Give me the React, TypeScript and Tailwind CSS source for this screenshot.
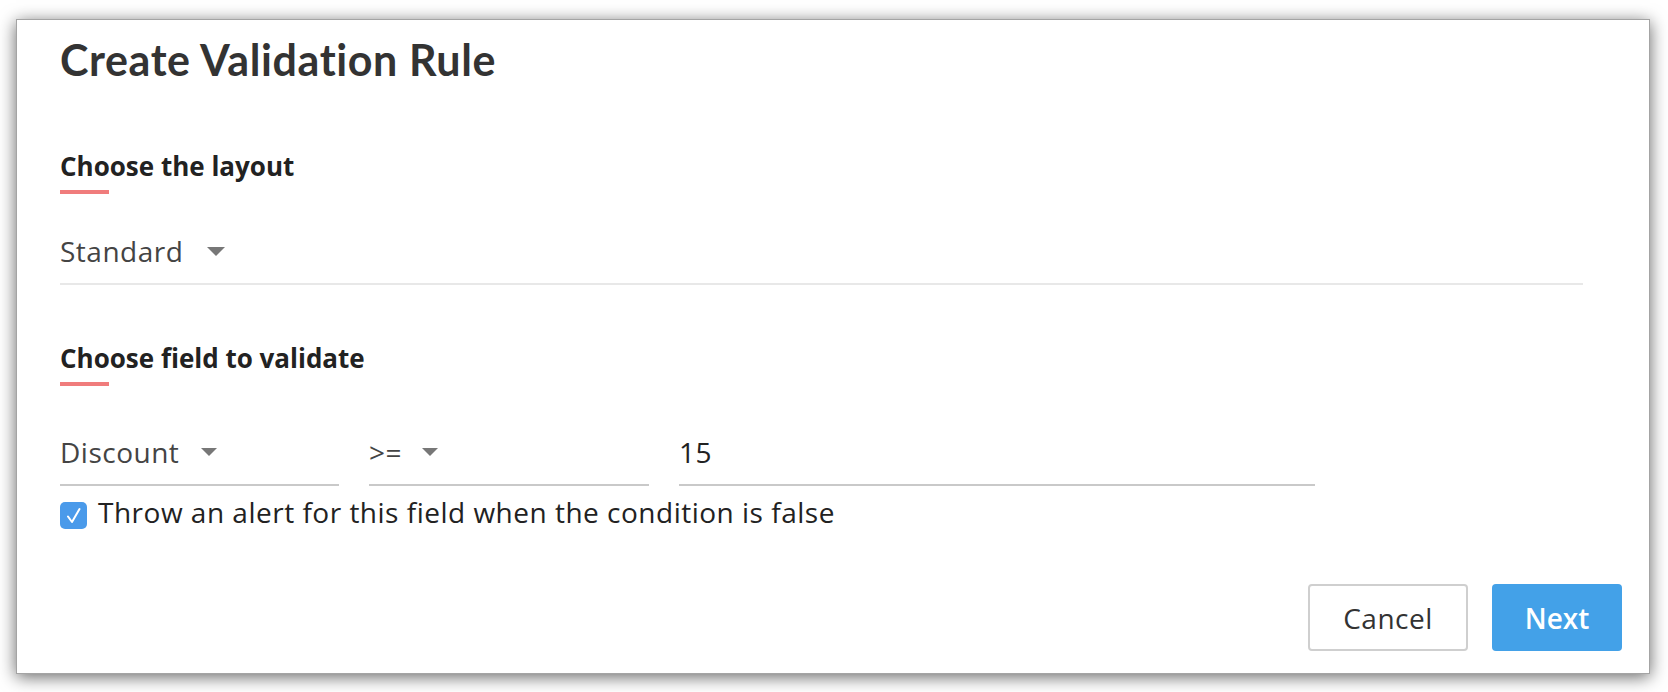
import React from "react";

function Caret({ w = 16, h = 8 }: { w?: number; h?: number }) {
  return (
    <svg width={w} height={h} viewBox="0 0 16 8" className="shrink-0">
      <path d="M0 0h16L8 8z" fill="#777" />
    </svg>
  );
}

function SectionTitle({ label }: { label: string }) {
  return (
    <div>
      <div className="text-[26px] leading-[32px] font-bold text-[#222]">{label}</div>
      <div className="mt-[8px] h-[4px] w-[49px] bg-[#f07c7c]" />
    </div>
  );
}

function SelectField({ value, width, gap }: { value: string; width: string; gap: string }) {
  return (
    <div className={`${width} flex items-center border-b-2 border-[#c9c9c9] pb-[14px]`}>
      <span className="text-[28px] leading-[36px] tracking-[0.5px] text-[#444]">{value}</span>
      <span className={gap}>
        <Caret />
      </span>
    </div>
  );
}

export default function App() {
  return (
    <div
      className="min-h-screen bg-white pt-[19px] pl-[16px]"
      style={{ fontFamily: "'Open Sans', 'Liberation Sans', sans-serif" }}
    >
      <div className="flex h-[655px] w-[1634px] flex-col border border-[#a4a4a4] bg-white pl-[43px] pr-[27px] pt-[14px] shadow-[0_3px_16px_rgba(0,0,0,0.6)]">
        {/* Header */}
        <h1 className="font-['Lato',sans-serif] text-[43px] leading-[52px] font-bold tracking-[0.6px] text-[#333]">
          Create Validation Rule
        </h1>

        {/* Layout */}
        <div className="mt-[64px]">
          <SectionTitle label="Choose the layout" />
        </div>
        <div className="mr-[39px] mt-[39px] flex items-center border-b-2 border-[#e8e8e8] pb-[14px]">
          <span className="text-[28px] leading-[36px] tracking-[0.5px] text-[#444]">Standard</span>
          <span className="ml-[24px]">
            <Caret w={18} h={9} />
          </span>
        </div>

        {/* Field */}
        <div className="mt-[57px]">
          <SectionTitle label="Choose field to validate" />
        </div>
        <div className="mt-[48px] flex gap-[30px]">
          <SelectField value="Discount" width="w-[279px]" gap="ml-[22px]" />
          <SelectField value=">=" width="w-[280px]" gap="ml-[20px]" />
          <div className="w-[636px] border-b-2 border-[#c9c9c9] pb-[14px]">
            <span className="text-[28px] leading-[36px] tracking-[0.5px] text-[#222]">15</span>
          </div>
        </div>

        <label className="mt-[16px] flex items-start gap-[11px]">
          <span className="h-[27px] w-[27px] shrink-0 rounded-[5px] bg-[#4a9aea]">
            <svg width="27" height="27" viewBox="0 0 27 27" fill="none">
              <path d="M8 14.5l4 5.5L19.5 7" stroke="white" strokeWidth="2" strokeLinecap="round" strokeLinejoin="round" />
            </svg>
          </span>
          <span className="text-[28px] leading-[21px] tracking-[0.5px] text-[#222]">
            Throw an alert for this field when the condition is false
          </span>
        </label>

        {/* Actions */}
        <div className="mt-[55px] flex justify-end gap-[24px]">
          <button className="h-[67px] w-[160px] rounded-[4px] border-2 border-[#cfcfcf] bg-white text-[28px] tracking-[0.5px] text-[#333]">
            Cancel
          </button>
          <button className="h-[67px] w-[130px] rounded-[4px] bg-[#43a1e8] text-[28px] font-semibold text-white">
            Next
          </button>
        </div>
      </div>
    </div>
  );
}
